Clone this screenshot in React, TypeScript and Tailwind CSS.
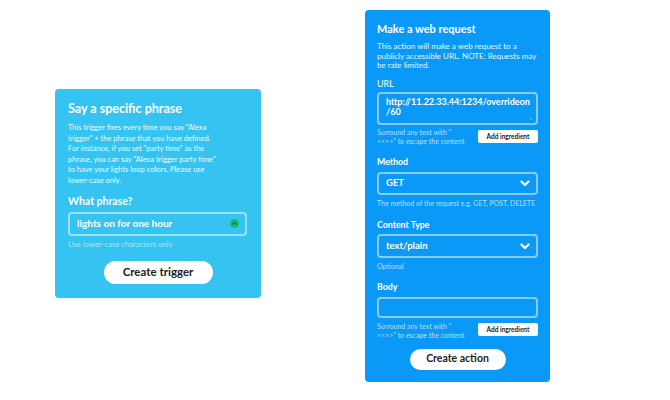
import React from "react";

// Small helper line under a field
function Hint({ children }: { children: React.ReactNode }) {
  return <p className="text-[7px] leading-[9px] text-white/70">{children}</p>;
}

function Chevron() {
  return (
    <svg width="10" height="7" viewBox="0 0 10 7" className="shrink-0">
      <polyline points="1.5,1.5 5,5 8.5,1.5" fill="none" stroke="white" strokeWidth="2.2" strokeLinecap="round" strokeLinejoin="round" />
    </svg>
  );
}

function AddIngredient() {
  return (
    <button className="mt-[1.5px] h-[13px] w-[60px] shrink-0 rounded-[2px] bg-white text-[6.5px] font-bold leading-[13px] text-[#222]">
      Add ingredient
    </button>
  );
}

function App() {
  return (
    <div
      className="flex h-[400px] w-[670px] items-start bg-white pl-[55px] pt-[10px]"
      style={{ fontFamily: "Lato, 'Noto Sans', sans-serif" }}
    >
      {/* Trigger card */}
      <div className="mt-[79px] w-[206px] rounded-[4px] bg-[#35c3f1] px-[13px] pb-[14px] pt-[12px] text-white">
        <h2 className="text-[12.5px] font-bold leading-[16px]">Say a specific phrase</h2>
        <p className="mt-[6px] text-[7.5px] leading-[10.6px] text-white/90">
          This trigger fires every time you say "Alexa
          <br />
          trigger" + the phrase that you have defined.
          <br />
          For instance, if you set "party time" as the
          <br />
          phrase, you can say "Alexa trigger party time"
          <br />
          to have your lights loop colors. Please use
          <br />
          lower-case only.
        </p>
        <div className="mt-[8.5px] text-[10.5px] font-bold leading-[13px]">What phrase?</div>
        <div className="mt-[3.5px] flex h-[24px] w-[179px] items-center justify-between rounded-[4px] border-2 border-white/50 pl-[7px] pr-[6px]">
          <span className="text-[10px] font-bold">lights on for one hour</span>
          <svg width="9" height="9" viewBox="0 0 10 10">
            <circle cx="5" cy="5" r="5" fill="#17b86f" />
            <path d="M3 6.3 A2 2 0 0 1 7 6.3" fill="none" stroke="#0b7a45" strokeWidth="1.3" />
          </svg>
        </div>
        <p className="mt-[4.5px] text-[7.7px] leading-[9px] text-white/60">Use lower-case characters only</p>
        <div className="mt-[11.5px] flex justify-center">
          <button className="h-[23px] w-[109px] rounded-full bg-white text-[11.5px] font-bold text-[#222]">
            Create trigger
          </button>
        </div>
      </div>

      {/* Action card */}
      <div className="ml-[104px] w-[185px] rounded-[4px] bg-[#0a99f7] px-[12px] pb-[12px] pt-[12px] text-white">
        <h2 className="text-[11px] font-bold leading-[14px]">Make a web request</h2>
        <p className="mt-[6px] text-[8px] leading-[9.5px] text-white/90">
          This action will make a web request to a
          <br />
          publicly accessible URL. NOTE: Requests may
          <br />
          be rate limited.
        </p>

        <div className="mt-[7px] text-[9px] leading-[12px]">URL</div>
        <div className="relative mt-[2px] h-[33px] rounded-[4px] border-2 border-white/50 pl-[7px] pt-[3px] text-[9px] font-bold leading-[10px]">
          http://11.22.33.44:1234/overrideon
          <br />
          /60
          <span className="absolute bottom-[3px] right-[4px] h-[2px] w-[2px] rounded-full bg-[#3fd98a]" />
        </div>
        <div className="mt-[3.5px] flex items-start justify-between">
          <Hint>
            Surround any text with "
            <br />
            &lt;&lt;&gt;&gt;" to escape the content
          </Hint>
          <AddIngredient />
        </div>

        <div className="mt-[9.5px] text-[8.8px] font-bold leading-[12px]">Method</div>
        <div className="mt-[4px] flex h-[23px] items-center justify-between rounded-[4px] border-2 border-white/50 pl-[7px] pr-[6px]">
          <span className="text-[9.5px] font-bold">GET</span>
          <Chevron />
        </div>
        <p className="mt-[4px] text-[7px] leading-[9px] text-white/70">The method of the request e.g. GET, POST, DELETE</p>

        <div className="mt-[11.5px] text-[8.8px] font-bold leading-[12px]">Content Type</div>
        <div className="mt-[3px] flex h-[24px] items-center justify-between rounded-[4px] border-2 border-white/50 pl-[7px] pr-[6px]">
          <span className="text-[9.5px] font-bold">text/plain</span>
          <Chevron />
        </div>
        <p className="mt-[3.5px] text-[7px] leading-[9px] text-white/70">Optional</p>

        <div className="mt-[10.5px] text-[8.8px] font-bold leading-[12px]">Body</div>
        <div className="mt-[4px] h-[21px] rounded-[4px] border-2 border-white/50" />
        <div className="mt-[3.5px] flex items-start justify-between">
          <Hint>
            Surround any text with "
            <br />
            &lt;&lt;&gt;&gt;" to escape the content
          </Hint>
          <AddIngredient />
        </div>

        <div className="mt-[9px] flex justify-center">
          <button className="h-[21px] w-[96px] rounded-full bg-white text-[10.5px] font-bold text-[#222]">
            Create action
          </button>
        </div>
      </div>
    </div>
  );
}

export default App;
